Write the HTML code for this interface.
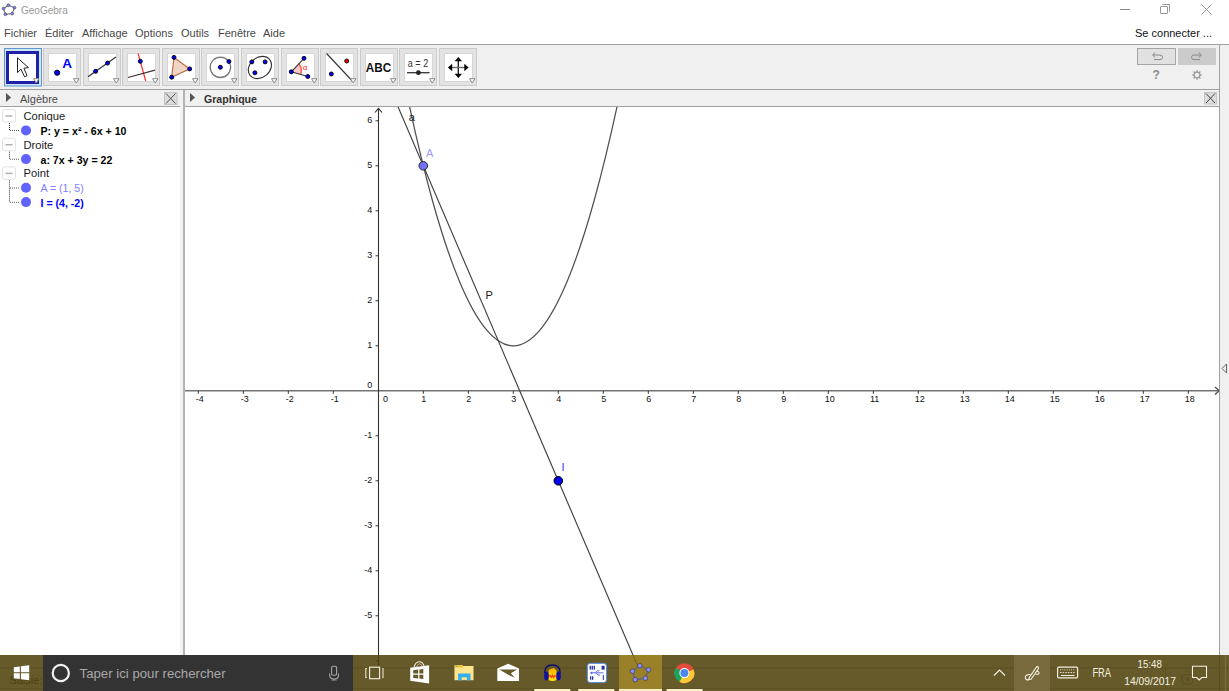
<!DOCTYPE html>
<html><head><meta charset="utf-8">
<style>
*{margin:0;padding:0;box-sizing:border-box}
html,body{width:1229px;height:691px;overflow:hidden;background:#fff;font-family:"Liberation Sans",sans-serif;position:relative}
.a{position:absolute;white-space:nowrap}
.menu{font-size:11px;color:#484848;top:27px;line-height:12px}
.hdr{background:#f0f0f0}
.tb{position:absolute;top:48px;width:38px;height:38px;background:#e2e2e2;border:1px solid #d0d0d0}
.tb .in{position:absolute;left:4px;top:4px;width:28px;height:28px;background:#fff;border:1px solid #e0e0e0}
.tb .dd{position:absolute;right:1px;bottom:1px}
.alg{font-size:11px;line-height:12px}
</style></head><body>

<!-- title bar -->
<svg class="a" style="left:0;top:0" width="20" height="20"><polygon points="8.4,5.2 14.5,7.7 12.2,13.6 5.4,14.3 3.5,8.6" fill="none" stroke="#707070" stroke-width="1.1"/><circle cx="8.4" cy="5.2" r="1.45" fill="#8080ff" stroke="#333" stroke-width="0.5"/><circle cx="14.5" cy="7.7" r="1.45" fill="#8080ff" stroke="#333" stroke-width="0.5"/><circle cx="12.2" cy="13.6" r="1.45" fill="#8080ff" stroke="#333" stroke-width="0.5"/><circle cx="5.4" cy="14.3" r="1.45" fill="#8080ff" stroke="#333" stroke-width="0.5"/><circle cx="3.5" cy="8.6" r="1.45" fill="#8080ff" stroke="#333" stroke-width="0.5"/></svg>
<div class="a" style="left:21px;top:5px;font-size:10px;color:#999;line-height:11px">GeoGebra</div>

<!-- window controls -->
<div class="a" style="left:1120px;top:9px;width:10px;height:1px;background:#8a8a8a"></div>
<div class="a" style="left:1160px;top:6px;width:8px;height:8px;border:1px solid #999;border-radius:1px"></div>
<div class="a" style="left:1162px;top:4px;width:8px;height:8px;border-top:1px solid #999;border-right:1px solid #999;border-radius:1px"></div>
<svg class="a" style="left:1201px;top:4px" width="11" height="11"><path d="M0.5 0.5L10.5 10.5M10.5 0.5L0.5 10.5" stroke="#999" stroke-width="1"/></svg>

<!-- menu -->
<div class="a menu" style="left:4px">Fichier</div>
<div class="a menu" style="left:45px">Éditer</div>
<div class="a menu" style="left:82px">Affichage</div>
<div class="a menu" style="left:135px">Options</div>
<div class="a menu" style="left:181px">Outils</div>
<div class="a menu" style="left:218px">Fenêtre</div>
<div class="a menu" style="left:263px">Aide</div>
<div class="a menu" style="left:1135px;color:#111">Se connecter ...</div>

<!-- toolbar -->
<div class="a" style="left:0;top:44px;width:1229px;height:1px;background:#a0a0a0"></div>
<div class="a hdr" style="left:0;top:45px;width:1219px;height:44px"></div>
<div class="a" style="left:0;top:89px;width:1219px;height:1px;background:#a0a0a0"></div>

<svg class="a" style="left:4px;top:48px" width="38" height="39" viewBox="0 0 38 39"><rect x="0.5" y="0.5" width="37" height="37.5" fill="#cfe6f8" stroke="#5e98cc"/><rect x="3.5" y="4.5" width="30" height="30" fill="#fff" stroke="#2121a6" stroke-width="3"/><path d="M13.5 9.8 L13.5 24.6 L16.9 21.2 L20.6 28.8 L23 27.6 L19.9 20.2 L24.4 19.6 Z" fill="#fff" stroke="#222" stroke-width="1" stroke-linejoin="miter"/><polygon points="29.5,30.7 35,30.7 32.25,35" fill="#fff" stroke="#8a8a8a" stroke-width="1"/></svg>
<svg class="a" style="left:43px;top:48px" width="38" height="38"><rect x="0.5" y="0.5" width="37" height="37" fill="#e3e3e3" stroke="#cbcbcb"/><rect x="5.5" y="5.5" width="28" height="28" fill="#fff" stroke="#d6d6d6"/><circle cx="14.1" cy="24.7" r="2.6" fill="#0000ff" stroke="#000" stroke-width="0.9"/><text x="19.3" y="19.5" font-family="Liberation Sans" font-size="13.5" font-weight="bold" fill="#0000ff">A</text><polygon points="30.5,30.7 36,30.7 33.25,35" fill="#fff" stroke="#8a8a8a" stroke-width="1"/></svg>
<svg class="a" style="left:83px;top:48px" width="38" height="38"><rect x="0.5" y="0.5" width="37" height="37" fill="#e3e3e3" stroke="#cbcbcb"/><rect x="5.5" y="5.5" width="28" height="28" fill="#fff" stroke="#d6d6d6"/><line x1="5" y1="28.8" x2="33" y2="9" stroke="#333" stroke-width="1.2"/><circle cx="12.6" cy="23.3" r="2.0" fill="#0000ff" stroke="#000" stroke-width="0.9"/><circle cx="24.5" cy="15.1" r="2.0" fill="#0000ff" stroke="#000" stroke-width="0.9"/><polygon points="30.5,30.7 36,30.7 33.25,35" fill="#fff" stroke="#8a8a8a" stroke-width="1"/></svg>
<svg class="a" style="left:122px;top:48px" width="38" height="38"><rect x="0.5" y="0.5" width="37" height="37" fill="#e3e3e3" stroke="#cbcbcb"/><rect x="5.5" y="5.5" width="28" height="28" fill="#fff" stroke="#d6d6d6"/><line x1="16.1" y1="5.5" x2="23.7" y2="33" stroke="#ff3030" stroke-width="1.2"/><line x1="6" y1="29.5" x2="33" y2="22.2" stroke="#403030" stroke-width="1.2"/><circle cx="18.3" cy="13.3" r="2.0" fill="#0000ff" stroke="#000" stroke-width="0.9"/><polygon points="30.5,30.7 36,30.7 33.25,35" fill="#fff" stroke="#8a8a8a" stroke-width="1"/></svg>
<svg class="a" style="left:162px;top:48px" width="38" height="38"><rect x="0.5" y="0.5" width="37" height="37" fill="#e3e3e3" stroke="#cbcbcb"/><rect x="5.5" y="5.5" width="28" height="28" fill="#fff" stroke="#d6d6d6"/><polygon points="12,9.4 27.7,20.9 9.7,29.2" fill="#f0d4c4" stroke="#c0704a" stroke-width="1.2"/><circle cx="12" cy="9.4" r="2.0" fill="#0000ff" stroke="#000" stroke-width="0.9"/><circle cx="27.7" cy="20.9" r="2.0" fill="#0000ff" stroke="#000" stroke-width="0.9"/><circle cx="9.7" cy="29.2" r="2.0" fill="#0000ff" stroke="#000" stroke-width="0.9"/><polygon points="30.5,30.7 36,30.7 33.25,35" fill="#fff" stroke="#8a8a8a" stroke-width="1"/></svg>
<svg class="a" style="left:201px;top:48px" width="38" height="38"><rect x="0.5" y="0.5" width="37" height="37" fill="#e3e3e3" stroke="#cbcbcb"/><rect x="5.5" y="5.5" width="28" height="28" fill="#fff" stroke="#d6d6d6"/><circle cx="19.4" cy="19.3" r="10.2" fill="none" stroke="#777" stroke-width="1.3"/><circle cx="19.4" cy="19.3" r="2.0" fill="#0000ff" stroke="#000" stroke-width="0.9"/><circle cx="27.9" cy="13.5" r="2.0" fill="#0000ff" stroke="#000" stroke-width="0.9"/><polygon points="30.5,30.7 36,30.7 33.25,35" fill="#fff" stroke="#8a8a8a" stroke-width="1"/></svg>
<svg class="a" style="left:241px;top:48px" width="38" height="38"><rect x="0.5" y="0.5" width="37" height="37" fill="#e3e3e3" stroke="#cbcbcb"/><rect x="5.5" y="5.5" width="28" height="28" fill="#fff" stroke="#d6d6d6"/><ellipse cx="18.9" cy="19.5" rx="12.6" ry="10" transform="rotate(-40 18.9 19.5)" fill="none" stroke="#333" stroke-width="1.1"/><circle cx="10.8" cy="13.9" r="2.0" fill="#0000ff" stroke="#000" stroke-width="0.9"/><circle cx="24.1" cy="13.9" r="2.0" fill="#0000ff" stroke="#000" stroke-width="0.9"/><circle cx="13.9" cy="24.8" r="2.0" fill="#0000ff" stroke="#000" stroke-width="0.9"/><polygon points="30.5,30.7 36,30.7 33.25,35" fill="#fff" stroke="#8a8a8a" stroke-width="1"/></svg>
<svg class="a" style="left:281px;top:48px" width="38" height="38"><rect x="0.5" y="0.5" width="37" height="37" fill="#e3e3e3" stroke="#cbcbcb"/><rect x="5.5" y="5.5" width="28" height="28" fill="#fff" stroke="#d6d6d6"/><path d="M10.3 23.8 L17.5 15.5 A11 11 0 0 1 19.8 26.3 Z" fill="#ffc8c8"/><path d="M17.5 15.5 A11 11 0 0 1 19.8 26.3" fill="none" stroke="#ff5050" stroke-width="1.3"/><line x1="10.3" y1="23.8" x2="23" y2="10.3" stroke="#333" stroke-width="1.1"/><line x1="10.3" y1="23.8" x2="26.8" y2="28.5" stroke="#333" stroke-width="1.1"/><circle cx="10.3" cy="23.8" r="2.0" fill="#0000ff" stroke="#000" stroke-width="0.9"/><circle cx="23" cy="10.3" r="2.0" fill="#0000ff" stroke="#000" stroke-width="0.9"/><circle cx="26.8" cy="28.5" r="2.0" fill="#0000ff" stroke="#000" stroke-width="0.9"/><text x="21.8" y="22" font-family="Liberation Sans" font-size="8" fill="#ff2020">α</text><polygon points="30.5,30.7 36,30.7 33.25,35" fill="#fff" stroke="#8a8a8a" stroke-width="1"/></svg>
<svg class="a" style="left:320px;top:48px" width="38" height="38"><rect x="0.5" y="0.5" width="37" height="37" fill="#e3e3e3" stroke="#cbcbcb"/><rect x="5.5" y="5.5" width="28" height="28" fill="#fff" stroke="#d6d6d6"/><line x1="6.6" y1="5.5" x2="32.3" y2="33" stroke="#333" stroke-width="1.1"/><circle cx="26.7" cy="13" r="2.0" fill="#ff0000" stroke="#000" stroke-width="0.9"/><circle cx="11.3" cy="26" r="2.0" fill="#0000ff" stroke="#000" stroke-width="0.9"/><polygon points="30.5,30.7 36,30.7 33.25,35" fill="#fff" stroke="#8a8a8a" stroke-width="1"/></svg>
<svg class="a" style="left:360px;top:48px" width="38" height="38"><rect x="0.5" y="0.5" width="37" height="37" fill="#e3e3e3" stroke="#cbcbcb"/><rect x="5.5" y="5.5" width="28" height="28" fill="#fff" stroke="#d6d6d6"/><text x="5.8" y="24.2" font-family="Liberation Sans" font-size="12" font-weight="bold" fill="#111" textLength="25.4" lengthAdjust="spacingAndGlyphs">ABC</text><polygon points="30.5,30.7 36,30.7 33.25,35" fill="#fff" stroke="#8a8a8a" stroke-width="1"/></svg>
<svg class="a" style="left:399px;top:48px" width="38" height="38"><rect x="0.5" y="0.5" width="37" height="37" fill="#e3e3e3" stroke="#cbcbcb"/><rect x="5.5" y="5.5" width="28" height="28" fill="#fff" stroke="#d6d6d6"/><text x="8.8" y="18.9" font-family="Liberation Sans" font-size="10.5" fill="#333" textLength="20.4" lengthAdjust="spacingAndGlyphs">a = 2</text><line x1="8" y1="24.7" x2="30.6" y2="24.7" stroke="#333" stroke-width="1.3"/><circle cx="19.4" cy="24.7" r="2.4" fill="#222"/><polygon points="30.5,30.7 36,30.7 33.25,35" fill="#fff" stroke="#8a8a8a" stroke-width="1"/></svg>
<svg class="a" style="left:439px;top:48px" width="38" height="38"><rect x="0.5" y="0.5" width="37" height="37" fill="#e3e3e3" stroke="#cbcbcb"/><rect x="5.5" y="5.5" width="28" height="28" fill="#fff" stroke="#d6d6d6"/><line x1="19.3" y1="11" x2="19.3" y2="28" stroke="#111" stroke-width="1.3"/><line x1="11" y1="19.5" x2="27.5" y2="19.5" stroke="#666" stroke-width="1.3"/><polygon points="19.3,8.9 15.6,13.2 23,13.2" fill="#000"/><polygon points="19.3,30 15.6,25.7 23,25.7" fill="#000"/><polygon points="8.9,19.5 13.2,15.8 13.2,23.2" fill="#000"/><polygon points="29.6,19.5 25.3,15.8 25.3,23.2" fill="#000"/><polygon points="30.5,30.7 36,30.7 33.25,35" fill="#fff" stroke="#8a8a8a" stroke-width="1"/></svg>
<!-- panels -->
<div class="a hdr" style="left:0;top:90px;width:180px;height:16px"></div>
<div class="a" style="left:0;top:106px;width:180px;height:1px;background:#a0a0a0"></div>
<div class="a hdr" style="left:180px;top:90px;width:3px;height:601px;background:#f2f2f2"></div>
<div class="a" style="left:183px;top:90px;width:2px;height:601px;background:#b3b3b3"></div>
<div class="a hdr" style="left:185px;top:90px;width:1034px;height:16px"></div>
<div class="a" style="left:185px;top:106px;width:1034px;height:1px;background:#a0a0a0"></div>
<div class="a hdr" style="left:1219px;top:45px;width:10px;height:646px"></div>
<div class="a" style="left:1219px;top:44px;width:1px;height:647px;background:#a0a0a0"></div>

<!-- algebra -->
<svg class="a" style="left:0;top:107px" width="180" height="120" viewBox="0 107 180 120"><rect x="2.5" y="109.5" width="13" height="12.5" rx="2" fill="#fff" stroke="#e2e2e2" stroke-width="1"/><line x1="5.5" y1="116.0" x2="12.5" y2="116.0" stroke="#b0b0b0" stroke-width="1.5"/><rect x="2.5" y="138.2" width="13" height="12.5" rx="2" fill="#fff" stroke="#e2e2e2" stroke-width="1"/><line x1="5.5" y1="144.7" x2="12.5" y2="144.7" stroke="#b0b0b0" stroke-width="1.5"/><rect x="2.5" y="166.9" width="13" height="12.5" rx="2" fill="#fff" stroke="#e2e2e2" stroke-width="1"/><line x1="5.5" y1="173.4" x2="12.5" y2="173.4" stroke="#b0b0b0" stroke-width="1.5"/><line x1="9.5" y1="123" x2="9.5" y2="131" stroke="#333" stroke-width="1" stroke-dasharray="1 1"/><line x1="10" y1="130.5" x2="20" y2="130.5" stroke="#555" stroke-width="1" stroke-dasharray="1 1"/><line x1="9.5" y1="151.7" x2="9.5" y2="159.7" stroke="#333" stroke-width="1" stroke-dasharray="1 1"/><line x1="10" y1="159.2" x2="20" y2="159.2" stroke="#555" stroke-width="1" stroke-dasharray="1 1"/><line x1="9.5" y1="180.4" x2="9.5" y2="202.5" stroke="#333" stroke-width="1" stroke-dasharray="1 1"/><line x1="10" y1="188" x2="20" y2="188" stroke="#555" stroke-width="1" stroke-dasharray="1 1"/><line x1="10" y1="202.3" x2="20" y2="202.3" stroke="#555" stroke-width="1" stroke-dasharray="1 1"/><circle cx="26" cy="129.9" r="5" fill="#6262ff" transform="translate(0 0.5)"/><circle cx="26" cy="158.6" r="5" fill="#6262ff" transform="translate(0 0.5)"/><circle cx="26" cy="187.3" r="5" fill="#6262ff" transform="translate(0 0.5)"/><circle cx="26" cy="201.6" r="5" fill="#6262ff" transform="translate(0 0.5)"/></svg>
<div class="a" style="left:23.5px;top:109.8px;font-size:11.2px;line-height:13px;color:#1a1a1a">Conique</div>
<div class="a" style="left:23.5px;top:138.5px;font-size:11.2px;line-height:13px;color:#1a1a1a">Droite</div>
<div class="a" style="left:23.5px;top:167.2px;font-size:11.2px;line-height:13px;color:#1a1a1a">Point</div>
<div class="a" style="left:40.5px;top:124.7px;font-size:10.6px;line-height:12px;font-weight:bold;color:#000">P: y = x² - 6x + 10</div>
<div class="a" style="left:40.5px;top:153.5px;font-size:10.6px;line-height:12px;font-weight:bold;color:#000">a: 7x + 3y = 22</div>
<div class="a" style="left:40.5px;top:182.2px;font-size:10.6px;line-height:12px;font-weight:normal;color:#8080ff">A = (1, 5)</div>
<div class="a" style="left:40.5px;top:196.5px;font-size:10.6px;line-height:12px;font-weight:bold;color:#0000ff">I = (4, -2)</div>
<!-- graph -->
<svg class="a" style="left:0;top:0" width="1229" height="691"><defs><clipPath id="gc"><rect x="185" y="107" width="1034" height="584"/></clipPath></defs><g clip-path="url(#gc)">
<line x1="184" y1="390.75" x2="1219" y2="390.75" stroke="#747474" stroke-width="1.6"/>
<line x1="378.5" y1="108" x2="378.5" y2="691" stroke="#333" stroke-width="1.1"/>
<path d="M375 112.5 L378.5 108.3 L382 112.5" fill="none" stroke="#333" stroke-width="1.1"/>
<path d="M1215 387 L1219 390.75 L1215 394.5" fill="none" stroke="#555" stroke-width="1.3"/>
<line x1="198.3" y1="391" x2="198.3" y2="393.8" stroke="#333" stroke-width="1"/>
<line x1="243.3" y1="391" x2="243.3" y2="393.8" stroke="#333" stroke-width="1"/>
<line x1="288.3" y1="391" x2="288.3" y2="393.8" stroke="#333" stroke-width="1"/>
<line x1="333.3" y1="391" x2="333.3" y2="393.8" stroke="#333" stroke-width="1"/>
<line x1="423.3" y1="391" x2="423.3" y2="393.8" stroke="#333" stroke-width="1"/>
<line x1="468.3" y1="391" x2="468.3" y2="393.8" stroke="#333" stroke-width="1"/>
<line x1="513.3" y1="391" x2="513.3" y2="393.8" stroke="#333" stroke-width="1"/>
<line x1="558.3" y1="391" x2="558.3" y2="393.8" stroke="#333" stroke-width="1"/>
<line x1="603.3" y1="391" x2="603.3" y2="393.8" stroke="#333" stroke-width="1"/>
<line x1="648.3" y1="391" x2="648.3" y2="393.8" stroke="#333" stroke-width="1"/>
<line x1="693.3" y1="391" x2="693.3" y2="393.8" stroke="#333" stroke-width="1"/>
<line x1="738.3" y1="391" x2="738.3" y2="393.8" stroke="#333" stroke-width="1"/>
<line x1="783.3" y1="391" x2="783.3" y2="393.8" stroke="#333" stroke-width="1"/>
<line x1="828.3" y1="391" x2="828.3" y2="393.8" stroke="#333" stroke-width="1"/>
<line x1="873.3" y1="391" x2="873.3" y2="393.8" stroke="#333" stroke-width="1"/>
<line x1="918.3" y1="391" x2="918.3" y2="393.8" stroke="#333" stroke-width="1"/>
<line x1="963.3" y1="391" x2="963.3" y2="393.8" stroke="#333" stroke-width="1"/>
<line x1="1008.3" y1="391" x2="1008.3" y2="393.8" stroke="#333" stroke-width="1"/>
<line x1="1053.3" y1="391" x2="1053.3" y2="393.8" stroke="#333" stroke-width="1"/>
<line x1="1098.3" y1="391" x2="1098.3" y2="393.8" stroke="#333" stroke-width="1"/>
<line x1="1143.3" y1="391" x2="1143.3" y2="393.8" stroke="#333" stroke-width="1"/>
<line x1="1188.3" y1="391" x2="1188.3" y2="393.8" stroke="#333" stroke-width="1"/>
<line x1="375.5" y1="660.8" x2="378.5" y2="660.8" stroke="#333" stroke-width="1"/>
<line x1="375.5" y1="615.8" x2="378.5" y2="615.8" stroke="#333" stroke-width="1"/>
<line x1="375.5" y1="570.8" x2="378.5" y2="570.8" stroke="#333" stroke-width="1"/>
<line x1="375.5" y1="525.8" x2="378.5" y2="525.8" stroke="#333" stroke-width="1"/>
<line x1="375.5" y1="480.8" x2="378.5" y2="480.8" stroke="#333" stroke-width="1"/>
<line x1="375.5" y1="435.8" x2="378.5" y2="435.8" stroke="#333" stroke-width="1"/>
<line x1="375.5" y1="345.8" x2="378.5" y2="345.8" stroke="#333" stroke-width="1"/>
<line x1="375.5" y1="300.8" x2="378.5" y2="300.8" stroke="#333" stroke-width="1"/>
<line x1="375.5" y1="255.8" x2="378.5" y2="255.8" stroke="#333" stroke-width="1"/>
<line x1="375.5" y1="210.8" x2="378.5" y2="210.8" stroke="#333" stroke-width="1"/>
<line x1="375.5" y1="165.8" x2="378.5" y2="165.8" stroke="#333" stroke-width="1"/>
<line x1="375.5" y1="120.8" x2="378.5" y2="120.8" stroke="#333" stroke-width="1"/>
<g font-family="Liberation Sans" font-size="9" fill="#111"><text x="199.7" y="402.2" text-anchor="middle">-4</text><text x="244.7" y="402.2" text-anchor="middle">-3</text><text x="289.7" y="402.2" text-anchor="middle">-2</text><text x="334.7" y="402.2" text-anchor="middle">-1</text><text x="423.8" y="402.2" text-anchor="middle">1</text><text x="468.8" y="402.2" text-anchor="middle">2</text><text x="513.8" y="402.2" text-anchor="middle">3</text><text x="558.8" y="402.2" text-anchor="middle">4</text><text x="603.8" y="402.2" text-anchor="middle">5</text><text x="648.8" y="402.2" text-anchor="middle">6</text><text x="693.8" y="402.2" text-anchor="middle">7</text><text x="738.8" y="402.2" text-anchor="middle">8</text><text x="783.8" y="402.2" text-anchor="middle">9</text><text x="829.7" y="402.2" text-anchor="middle">10</text><text x="874.7" y="402.2" text-anchor="middle">11</text><text x="919.7" y="402.2" text-anchor="middle">12</text><text x="964.7" y="402.2" text-anchor="middle">13</text><text x="1009.7" y="402.2" text-anchor="middle">14</text><text x="1054.7" y="402.2" text-anchor="middle">15</text><text x="1099.7" y="402.2" text-anchor="middle">16</text><text x="1144.7" y="402.2" text-anchor="middle">17</text><text x="1189.7" y="402.2" text-anchor="middle">18</text><text x="385.4" y="402.2" text-anchor="middle">0</text><text x="372.2" y="663.4" text-anchor="end">-6</text><text x="372.2" y="618.4" text-anchor="end">-5</text><text x="372.2" y="573.4" text-anchor="end">-4</text><text x="372.2" y="528.4" text-anchor="end">-3</text><text x="372.2" y="483.4" text-anchor="end">-2</text><text x="372.2" y="438.4" text-anchor="end">-1</text><text x="372.2" y="348.4" text-anchor="end">1</text><text x="372.2" y="303.4" text-anchor="end">2</text><text x="372.2" y="258.4" text-anchor="end">3</text><text x="372.2" y="213.4" text-anchor="end">4</text><text x="372.2" y="168.4" text-anchor="end">5</text><text x="372.2" y="123.4" text-anchor="end">6</text><text x="372.2" y="387.8" text-anchor="end">0</text></g>
<path d="M405.30 86.60 Q418.80 151.40 432.30 200.00 Q445.80 248.60 459.30 281.00 Q472.80 313.40 486.30 329.60 Q499.80 345.80 513.30 345.80 Q526.80 345.80 540.30 329.60 Q553.80 313.40 567.30 281.00 Q580.80 248.60 594.30 200.00 Q607.80 151.40 621.30 86.60" fill="none" stroke="#505050" stroke-width="1.25"/>
<line x1="392.44" y1="93.80" x2="654.73" y2="705.80" stroke="#404040" stroke-width="1.15"/>
<circle cx="423.30" cy="165.80" r="4.3" fill="#7272ff" stroke="#222" stroke-width="1"/>
<circle cx="558.30" cy="480.80" r="4.3" fill="#0000f0" stroke="#000" stroke-width="1"/>
<g font-family="Liberation Sans" font-size="11">
<text x="408.8" y="120.6" fill="#222">a</text>
<text x="426" y="156.6" fill="#9a9aff">A</text>
<text x="485.6" y="299.1" fill="#222">P</text>
<text x="561.5" y="471.3" fill="#3a3aff">I</text>
</g>
</g></svg>
<!-- headers text -->
<svg class="a" style="left:6px;top:93px" width="6" height="10"><polygon points="0,0 5,4.5 0,9" fill="#555"/></svg>
<div class="a alg" style="left:20px;top:93px;color:#4a4a4a">Algèbre</div>
<svg class="a" style="left:190px;top:93px" width="6" height="10"><polygon points="0,0 5,4.5 0,9" fill="#555"/></svg>
<div class="a alg" style="left:204px;top:93px;color:#333;font-weight:bold;font-size:10.6px">Graphique</div>

<!-- close buttons -->
<svg class="a" style="left:164px;top:92px" width="14" height="13" viewBox="0 0 14 13"><rect x="0.5" y="0.5" width="12.5" height="12" fill="#dcdcdc" stroke="#c4c4c4"/><path d="M2 1.5 L11.5 11.5 M11.5 1.5 L2 11.5" stroke="#555" stroke-width="1"/></svg>
<svg class="a" style="left:1204px;top:92px" width="14" height="13" viewBox="0 0 14 13"><rect x="0.5" y="0.5" width="12" height="11.5" fill="#dcdcdc" stroke="#c4c4c4"/><path d="M2 1.5 L11 11 M11 1.5 L2 11" stroke="#444" stroke-width="1"/></svg>
<!-- undo redo -->
<div class="a" style="left:1137px;top:48px;width:39px;height:17px;background:#e1e1e1;border:1px solid #a6a6a6"></div>
<div class="a" style="left:1178px;top:48px;width:38px;height:17px;background:#cbcbcb"></div>
<svg class="a" style="left:1150px;top:51px" width="14" height="11"><path d="M3 4 L10 4 Q12.5 4 12.5 6.3 Q12.5 8.6 10 8.6 L4 8.6" fill="none" stroke="#888" stroke-width="1"/><path d="M5.2 1.5 L2.5 4 L5.2 6.5" fill="none" stroke="#888" stroke-width="1"/></svg>
<svg class="a" style="left:1190px;top:51px" width="14" height="11"><path d="M11 4 L4 4 Q1.5 4 1.5 6.3 Q1.5 8.6 4 8.6 L10 8.6" fill="none" stroke="#8a8a8a" stroke-width="1"/><path d="M8.8 1.5 L11.5 4 L8.8 6.5" fill="none" stroke="#8a8a8a" stroke-width="1"/></svg>
<div class="a" style="left:1152.5px;top:69px;font-size:12px;line-height:13px;font-weight:bold;color:#8c8c8c">?</div>
<svg class="a" style="left:1191px;top:69px" width="12" height="12" viewBox="-6 -6 12 12"><g stroke="#9a9a9a" stroke-width="1.4"><line x1="0" y1="-4.8" x2="0" y2="4.8"/><line x1="-4.8" y1="0" x2="4.8" y2="0"/><line x1="-3.4" y1="-3.4" x2="3.4" y2="3.4"/><line x1="-3.4" y1="3.4" x2="3.4" y2="-3.4"/></g><circle r="2.9" fill="#f0f0f0" stroke="#9a9a9a" stroke-width="1.3"/></svg>
<!-- right strip triangle -->
<svg class="a" style="left:1221px;top:363px" width="7" height="11"><polygon points="5.5,1 1,5.5 5.5,10" fill="#f0f0f0" stroke="#555" stroke-width="0.9"/></svg>

<!-- taskbar -->
<svg class="a" style="left:0;top:655px" width="1229" height="36" viewBox="0 655 1229 36">
<rect x="0" y="655" width="1229" height="36" fill="#675a2a"/>
<!-- translucent underlying window hints -->
<line x1="0" y1="668" x2="1229" y2="668" stroke="#5a4e22" stroke-width="1"/>
<line x1="0" y1="688.5" x2="1229" y2="688.5" stroke="#5e5224" stroke-width="1"/>
<line x1="378.5" y1="655" x2="378.5" y2="666" stroke="#4a3f15" stroke-width="1"/>
<line x1="375.5" y1="660.8" x2="378.5" y2="660.8" stroke="#4a3f15" stroke-width="1"/>

<line x1="1219.5" y1="655" x2="1219.5" y2="691" stroke="#5a4e22" stroke-width="1"/>
<line x1="1225.5" y1="655" x2="1225.5" y2="691" stroke="#7a6d42" stroke-width="1.2"/>
<rect x="1182" y="674.5" width="10.5" height="9.5" rx="2" fill="none" stroke="#5a4e22" stroke-width="1"/><polygon points="1189,676.8 1185.5,679.2 1189,681.6" fill="#5a4e22"/>
<line x1="1165.5" y1="668" x2="1165.5" y2="688" stroke="#5e5224" stroke-width="1"/>
<text x="9.4" y="683.6" font-family="Liberation Sans" font-size="11" fill="#4c4014">Saisie:</text>
<!-- start -->
<polygon points="13.8,667.2 19.8,666.4 19.8,672.2 13.8,672.2" fill="#fff"/>
<polygon points="20.9,666.2 29.2,665.2 29.2,672.2 20.9,672.2" fill="#fff"/>
<polygon points="13.8,673.3 19.8,673.3 19.8,679.1 13.8,678.3" fill="#fff"/>
<polygon points="20.9,673.3 29.2,673.3 29.2,680.2 20.9,679.3" fill="#fff"/>
<!-- search -->
<rect x="43" y="655" width="310" height="36" fill="#333333"/>
<circle cx="60.8" cy="673" r="8.1" fill="none" stroke="#f2f2f2" stroke-width="2.2"/>
<text x="79.6" y="677.9" font-family="Liberation Sans" font-size="13.2" fill="#a9a9a9" textLength="146" lengthAdjust="spacingAndGlyphs">Taper ici pour rechercher</text>
<rect x="331.6" y="666.3" width="5" height="9" rx="1.5" fill="none" stroke="#a8a8a8" stroke-width="1.1"/>
<path d="M329.7 673.5 L329.7 675.5 Q329.7 679 334.1 679 Q338.5 679 338.5 675.5 L338.5 673.5 M334.1 679 L334.1 680" fill="none" stroke="#a8a8a8" stroke-width="1.1"/>
<line x1="331.5" y1="680" x2="336.7" y2="680" stroke="#a8a8a8" stroke-width="0.9"/>
<!-- task view -->
<rect x="369.6" y="667.2" width="10" height="11.5" fill="none" stroke="#f5f2e6" stroke-width="1.1"/>
<path d="M367 668.5 L365.8 668.5 L365.8 677.5 L367 677.5 M382.2 668.5 L383 668.5 L383 677.5 L382.2 677.5" fill="none" stroke="#e8e2cc" stroke-width="1.1"/>
<!-- store -->
<path d="M414 667.5 Q415.5 661.8 419.2 661.8 Q422.9 661.8 424.3 666.6" fill="none" stroke="#f4f0e6" stroke-width="1.1"/>
<path d="M416.4 667.3 Q417.5 663.8 419.6 663.8 Q421.5 663.8 422.3 666.7" fill="none" stroke="#cfc8b4" stroke-width="0.8"/>
<polygon points="410.2,667.8 429.1,665.2 429.1,683.4 410.2,680.8" fill="#fff"/>
<polygon points="413.2,670.2 418.2,669.6 418.2,673.6 413.2,673.6" fill="#675a2a"/>
<polygon points="419.4,669.4 423.3,668.9 423.3,673.6 419.4,673.6" fill="#675a2a"/>
<polygon points="413.2,674.8 418.2,674.8 418.2,678.5 413.2,678.1" fill="#675a2a"/>
<polygon points="419.4,674.8 423.3,674.8 423.3,678.9 419.4,678.6" fill="#675a2a"/>
<!-- explorer -->
<rect x="454.5" y="666" width="19" height="14.2" fill="#fde58e"/>
<rect x="454.5" y="665" width="8.5" height="2.5" fill="#f0c13a"/>
<rect x="455.3" y="665.6" width="2" height="1" fill="#3fb59a"/>
<path d="M458.1 680.6 L458.1 673.6 L470.5 673.6 L470.5 680.6 L466.9 680.6 L466.9 677.2 L461.7 677.2 L461.7 680.6 Z" fill="#34aef0"/>
<!-- mail -->
<polygon points="497.3,668.6 508.2,663.8 519,668.6 519,681 497.3,681" fill="#fff"/>
<polygon points="499.3,669.5 517.2,669.5 510.8,673.2 514.8,677.8 507.8,674.6" fill="#675a2a"/>
<!-- audacity -->
<path d="M544.6 673 Q544.6 665 552.4 665 Q560.2 665 560.2 673" fill="none" stroke="#0c0c70" stroke-width="1.3"/>
<defs><linearGradient id="flm" x1="0" y1="0" x2="0" y2="1"><stop offset="0" stop-color="#ffb000"/><stop offset="0.5" stop-color="#ffd000"/><stop offset="1" stop-color="#ffe800"/></linearGradient></defs>
<path d="M548.6 671 Q549.5 668.5 550.8 669.6 Q551.8 667.2 552.8 668.8 Q554 667 555.2 669.8 Q556.2 669 556.5 671.5 L556.5 680 Q552.5 682.2 548.6 680 Z" fill="url(#flm)"/>
<path d="M548.6 676.5 L550 675.6 L551.2 677.4 L552.4 675.2 L553.6 677.6 L554.8 675.6 L556.5 676.5" fill="none" stroke="#ff3a10" stroke-width="1.2"/>
<ellipse cx="546.4" cy="676" rx="2.3" ry="4.5" fill="#1212a0"/>
<ellipse cx="558.6" cy="676" rx="2.3" ry="4.5" fill="#1212a0"/>
<!-- usb app -->
<rect x="587.3" y="663.3" width="19.3" height="19.3" rx="3" fill="#fff" stroke="#4d86e0" stroke-width="1"/>
<g fill="#2030a0"><rect x="589.6" y="665.8" width="1.3" height="3.8"/><rect x="591.6" y="665.8" width="1.3" height="3.8"/><rect x="593.6" y="665.8" width="1.3" height="3.8"/><rect x="601.6" y="665.8" width="3" height="3.8"/><rect x="590" y="676.3" width="1.3" height="3.4"/><rect x="592" y="676.3" width="1.3" height="3.4"/><rect x="602.8" y="675" width="1" height="5"/></g>
<path d="M591.5 672.8 L603.5 672.8 M595 672.8 L597 670.8 L599.5 670.8 M596 672.8 L598 675 L600 675" fill="none" stroke="#5060f0" stroke-width="0.9"/>
<circle cx="591.5" cy="672.8" r="1.1" fill="#5060f0"/>
<!-- geogebra active -->
<rect x="619" y="655" width="43" height="34" fill="#9a8028"/>
<line x1="633" y1="655" x2="637.7" y2="666" stroke="#6e5c20" stroke-width="0.9"/>
<polygon points="639.8,665.7 648.6,669.8 645.3,678.2 635.2,679.6 632.5,671.2" fill="none" stroke="#6a6a6a" stroke-width="1.6"/>
<g fill="#8e8eff" stroke="#333" stroke-width="0.6"><circle cx="639.8" cy="665.7" r="2.3"/><circle cx="648.6" cy="669.8" r="2.3"/><circle cx="645.3" cy="678.2" r="2.3"/><circle cx="635.2" cy="679.6" r="2.3"/><circle cx="632.5" cy="671.2" r="2.3"/></g>
<!-- chrome -->
<circle cx="684.4" cy="673.1" r="9.9" fill="#e24a3c"/>
<path d="M684.4 673.1 L675.8 668.1 A9.9 9.9 0 0 0 679.4 681.7 Z" fill="#1ea35a"/>
<path d="M684.4 673.1 L693.6 669.4 A9.9 9.9 0 0 1 679 681.4 Z" fill="#fcc934"/>
<path d="M684.4 673.1 L675.8 668.1 A9.9 9.9 0 0 0 679.4 681.7 L684.4 673.1" fill="#1ea35a"/>
<circle cx="684.4" cy="673.1" r="5" fill="#fff"/>
<circle cx="684.4" cy="673.1" r="4" fill="#4a88ee"/>
<!-- underlines -->
<g fill="#fbf1c6"><rect x="534.3" y="689" width="36" height="2"/><rect x="578.3" y="689" width="36" height="2"/><rect x="619" y="689" width="43" height="2"/><rect x="666.6" y="689" width="36" height="2"/></g>
<!-- tray -->
<path d="M994 675.5 L999.5 670 L1005 675.5" fill="none" stroke="#f2eee0" stroke-width="1.2"/>
<rect x="1014" y="655" width="36" height="36" fill="#786a3c"/>
<path d="M1037.4 666.4 Q1039 667 1038.2 669 L1031 679.3 L1028.8 679.6 L1029.3 677.4 L1036.5 667 Z" fill="none" stroke="#f4f0e2" stroke-width="1.1"/>
<path d="M1030.5 674.5 Q1025.5 674 1025.2 677.5 Q1025.5 680.2 1029 679.8 M1036.8 671.2 Q1039.8 671.5 1038.8 673.8 Q1037.8 674.6 1035.6 673.9" fill="none" stroke="#f4f0e2" stroke-width="1.1"/>
<rect x="1057.6" y="667.1" width="20" height="10.8" rx="1.2" fill="none" stroke="#f4f0e2" stroke-width="1.2"/>
<line x1="1060" y1="669.8" x2="1075.5" y2="669.8" stroke="#d8d2bc" stroke-width="1" stroke-dasharray="1 1.2"/>
<line x1="1060" y1="672.6" x2="1075.5" y2="672.6" stroke="#e8e2cc" stroke-width="1" stroke-dasharray="1.6 1"/>
<rect x="1061" y="675" width="13.5" height="1" fill="#f4f0e2"/>
<text x="1092.4" y="676.9" font-family="Liberation Sans" font-size="12" fill="#f4f0e0" textLength="18.6" lengthAdjust="spacingAndGlyphs">FRA</text>
<text x="1137.6" y="668.4" font-family="Liberation Sans" font-size="11.2" fill="#f4f0e0" textLength="24.2" lengthAdjust="spacingAndGlyphs">15:48</text>
<text x="1124.2" y="684.7" font-family="Liberation Sans" font-size="11.2" fill="#f4f0e0" textLength="51.8" lengthAdjust="spacingAndGlyphs">14/09/2017</text>
<path d="M1192.5 666.3 L1206.5 666.3 L1206.5 677.5 L1201.8 677.5 L1199.2 680 L1196.6 677.5 L1192.5 677.5 Z" fill="none" stroke="#f4f0e2" stroke-width="1.1"/>
</svg>

</body></html>
